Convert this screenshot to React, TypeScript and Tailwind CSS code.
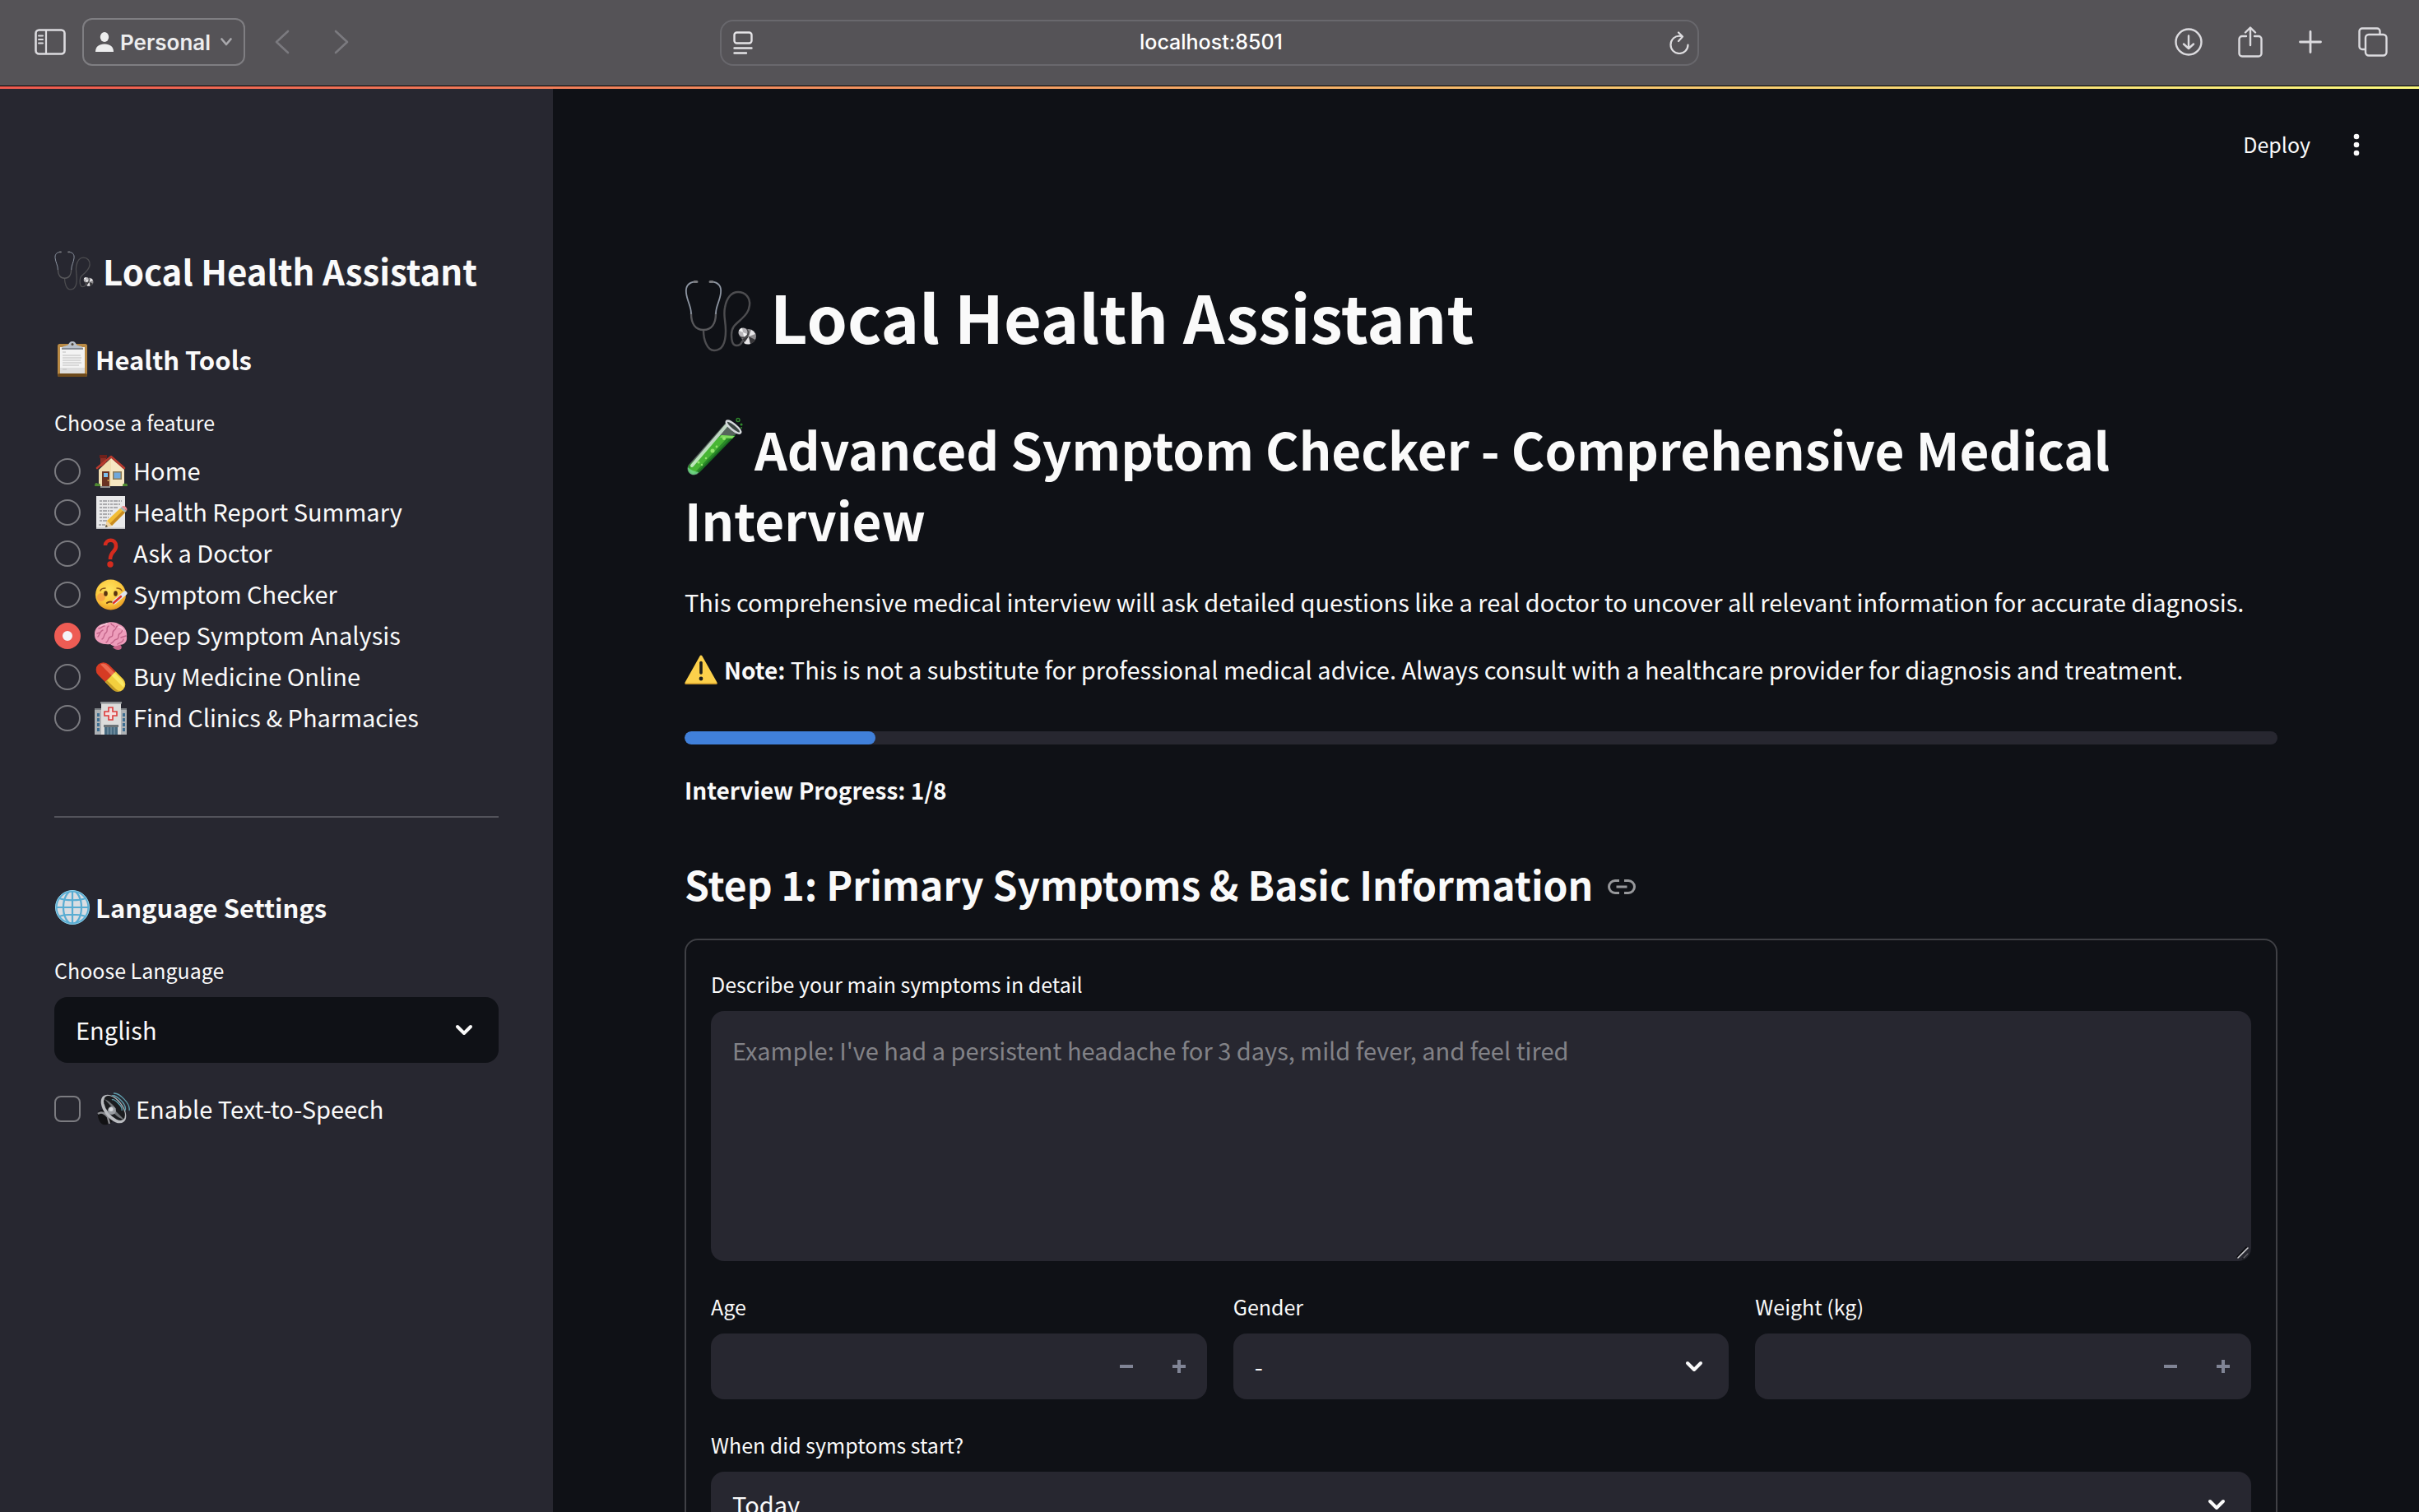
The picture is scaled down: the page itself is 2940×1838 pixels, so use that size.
import React, { useState } from "react";

type SvgProps = { className?: string };

function Stethoscope({ className }: SvgProps) {
  return (
    <svg viewBox="0 0 88 88" fill="none" strokeLinecap="round" className={className} aria-hidden="true">
      <path d="M23 62C23 72 27 86 36 86C46 86 50 76 50 62C50 50 47 44 49 34C51 22 57 15 65 15C74 15 80 22 79 31C78 40 73 44 68 49C61 55 57 58 57 67C57 75 59 80 63 80C66 80 69 78 70 75" stroke="#4d4d50" strokeWidth="2.400" />
      <path d="M8 41C8 53 13 61 23 61C33 61 38 53 38 41" stroke="#58585b" strokeWidth="2.400" />
      <path d="M13 2.500C5 3 1 8 2 16C3 26 8 32 8 41M33 2.500C41 3 45 8 44 16C43 26 38 32 38 41" stroke="#8e96a3" strokeWidth="1.800" />
      <path d="M12 2.500H15M31 2.500H34" stroke="#77787c" strokeWidth="3" />
      <circle cx="78" cy="69" r="9" fill="#8d8b8e" />
      <path d="M78 69L72 77A9 9 0 0 0 80 78ZM78 69L86 66A9 9 0 0 0 81 61Z" fill="#e6e5e7" />
      <path d="M78 69L80 78A9 9 0 0 0 86 73ZM78 69L70 72L73 76Z" fill="#38373a" />
      <circle cx="72" cy="65" r="6.500" fill="#4a494c" />
      <circle cx="71" cy="64" r="5.500" fill="#b7b5b9" />
      <path d="M71 64L66 62A5.500 5.500 0 0 1 70 58.500ZM71 64L76 66A5.500 5.500 0 0 1 72 69.500Z" fill="#f5f5f6" />
    </svg>
  );
}

function TestTube({ className }: SvgProps) {
  return (
    <svg viewBox="0 0 72 76" fill="none" className={className} aria-hidden="true">
      <path d="M50 8L5 59C0 66 8 75 16 70L64 20Z" fill="#56645c" />
      <path d="M44 23L5 60C1 67 9 74 16 69L60 24Z" fill="#2a8a28" />
      <path d="M44 23L7 60C5 64 7 69 11 70L54 24Z" fill="#48b535" />
      <path d="M4 64C5 72 13 73 17 68C13 67 8 66 4 62Z" fill="#7ee0a0" opacity=".7" />
      <path d="M51 11L9 60" stroke="#d9f3dc" strokeWidth="4" strokeLinecap="round" opacity=".8" />
      <path d="M61 23L17 68" stroke="#1b6f22" strokeWidth="2" />
      <path d="M45 23L61 24L58 27L43 26Z" fill="#7fdc5c" />
      <path d="M51 6C54 3 70 16 68 20C66 24 48 10 51 6Z" fill="#3a4541" stroke="#d5d9dc" strokeWidth="2.500" />
      <g fill="#93e46f">
        <circle cx="34" cy="42" r="2.500" />
        <circle cx="39" cy="37" r="1.400" />
        <circle cx="48" cy="27" r="2" />
        <circle cx="26" cy="51" r="1.300" />
        <circle cx="17" cy="56" r="1.600" />
        <circle cx="21" cy="59" r="1.200" />
      </g>
      <circle cx="65" cy="4.500" r="2" stroke="#2f8a2c" strokeWidth="1.400" />
      <circle cx="69" cy="10" r="1.600" fill="#2f8a2c" />
      <circle cx="69" cy="14" r="1" fill="#2f8a2c" />
    </svg>
  );
}

function Clipboard({ className }: SvgProps) {
  return (
    <svg viewBox="0 0 44 44" fill="none" className={className} aria-hidden="true">
      <rect x="4" y="3" width="36" height="40" rx="2.500" fill="#b98a45" />
      <rect x="4" y="39" width="36" height="4" rx="2" fill="#6d4a1c" />
      <path d="M7 7H37V39H7Z" fill="#f3f3f3" />
      <path d="M7 32H37V39H7Z" fill="#dedede" />
      <g stroke="#bdbdbd" strokeWidth="1.200">
        <path d="M10 13H14M10 17H32M10 20H33M10 23H32M10 26H33M10 29H30M10 34H15" />
      </g>
      <path d="M9 9C9 5 15 6 17 4C18 2 19 0 22 0C25 0 26 2 27 4C29 6 35 5 35 9Z" fill="#b8c0ca" />
      <path d="M9 9H35" stroke="#6f757e" strokeWidth="1.500" />
      <circle cx="22" cy="3.500" r="1.500" fill="#4d4338" />
    </svg>
  );
}

function House({ className }: SvgProps) {
  return (
    <svg viewBox="0 0 40 40" fill="none" className={className} aria-hidden="true">
      <path d="M7 1H14V14H7Z" fill="#8e2f26" />
      <path d="M6 0H15V4H6Z" fill="#6f211b" />
      <path d="M5 18L20 4L36 18V38H5Z" fill="#f1ddb0" />
      <path d="M20 4L36 18V38H20Z" fill="#f7e7c2" />
      <path d="M3 16L20 2L36 16" stroke="#b93a2e" strokeWidth="2.600" strokeLinejoin="round" strokeLinecap="round" />
      <path d="M9 20H18V38H9Z" fill="#6a3322" />
      <rect x="11" y="22" width="5" height="5" fill="#7cc0ee" />
      <circle cx="16.500" cy="31" r="1" fill="#e2b95a" />
      <rect x="22" y="20" width="11" height="10" fill="#8c7a55" />
      <rect x="23.500" y="21.500" width="8" height="7" fill="#6fa8dc" />
      <path d="M0 38C0 34 2 33 4 35C7 34 7 36 7 38ZM34 38C34 35 35 34 37 35C40 34 40 36 40 38Z" fill="#4f8a32" />
      <path d="M7 38H19V40H7Z" fill="#8d8d8d" />
    </svg>
  );
}

function Memo({ className }: SvgProps) {
  return (
    <svg viewBox="0 0 40 40" fill="none" className={className} aria-hidden="true">
      <rect x="2" y="0" width="35" height="40" fill="#e9e9ea" />
      <path d="M2 38.500H37V40H2Z" fill="#bdbdbf" />
      <g stroke="#6e6e73" strokeWidth="1.200" strokeDasharray="3 1 5 1 2 1">
        <path d="M6 6H33M6 10H31M6 14H28M6 18H23M6 22H20M6 26H17M6 30H15M5 35H13" />
      </g>
      <path d="M31 15L37 20L21 36L13 38L15 30Z" fill="#f2bd36" />
      <path d="M34 18L37 20L21 36L18 34Z" fill="#c98b1f" />
      <path d="M15 30L21 36L13 38Z" fill="#efd3a4" />
      <path d="M14 35L16 37L13 38Z" fill="#3a3a3a" />
      <path d="M31 15L33 13L39 18L37 20Z" fill="#a9b7ae" />
      <path d="M33 13C35 10 41 14 39 18Z" fill="#ee8d92" />
    </svg>
  );
}

function Question({ className }: SvgProps) {
  return (
    <svg viewBox="0 0 40 40" fill="none" className={className} aria-hidden="true">
      <path d="M13 10C13 2 26 1 26 11C26 18 19 17 19 27" stroke="#d52b1e" strokeWidth="4.600" />
      <circle cx="19" cy="33" r="3.700" fill="#d52b1e" />
    </svg>
  );
}

function SickFace({ className }: SvgProps) {
  return (
    <svg viewBox="0 0 40 40" fill="none" className={className} aria-hidden="true">
      <defs>
        <radialGradient id="face" cx=".45" cy=".35" r=".65">
          <stop offset="0" stopColor="#ffe561" />
          <stop offset=".7" stopColor="#fbc63b" />
          <stop offset="1" stopColor="#e69a25" />
        </radialGradient>
      </defs>
      <circle cx="19.500" cy="20" r="18.500" fill="url(#face)" />
      <circle cx="8" cy="23" r="5" fill="#f58a45" opacity=".55" />
      <ellipse cx="13.500" cy="18.500" rx="2.300" ry="3.300" fill="#5a3410" />
      <ellipse cx="25.500" cy="18.500" rx="2.300" ry="3.300" fill="#5a3410" />
      <path d="M7 15C8 12 11 12 13 12M27 12C30 12 32 13 33 15" stroke="#8a571b" strokeWidth="1.500" strokeLinecap="round" />
      <path d="M15 30C17 28 21 28 24 30" stroke="#6b3b12" strokeWidth="2" strokeLinecap="round" />
      <path d="M24 29L37 18" stroke="#dfe6ee" strokeWidth="5" strokeLinecap="round" />
      <path d="M23 30L32 22" stroke="#e2332d" strokeWidth="2.400" strokeLinecap="round" />
    </svg>
  );
}

function BrainEmoji({ className }: SvgProps) {
  return (
    <svg viewBox="0 0 40 40" fill="none" className={className} aria-hidden="true">
      <path d="M27 30C32 30 34 33 32 36C29 38 25 37 22 34Z" fill="#c9658a" />
      <path d="M0 20C-1 12 4 6 12 5C18 2 27 3 30 6C36 8 40 14 39 21C40 27 36 31 30 31C26 33 22 33 19 30C12 31 1 29 0 20Z" fill="#ee9dbb" />
      <g stroke="#c4668b" strokeWidth="1.400" strokeLinecap="round">
        <path d="M4 21C7 18 6 14 10 13M9 24C13 22 10 18 14 16C17 14 13 10 17 8M14 28C18 26 15 22 20 21C24 20 20 15 24 13C27 12 25 8 28 8M20 29C24 28 22 25 27 24C31 23 27 18 31 17C34 16 33 12 35 12M28 30C30 28 35 28 35 24M5 11C8 11 9 8 12 8M20 5C21 8 23 6 24 9M3 17L6 16M32 22L38 20" />
      </g>
      <path d="M7 8C10 6 13 6 15 5M29 9C32 9 34 11 35 13" stroke="#f9cbdc" strokeWidth="1.500" strokeLinecap="round" />
    </svg>
  );
}

function PillEmoji({ className }: SvgProps) {
  return (
    <svg viewBox="0 0 40 40" fill="none" className={className} aria-hidden="true">
      <g transform="rotate(45 19.500 20)">
        <path d="M19 11H7A9 9 0 0 0 7 29H19Z" fill="#d63b24" />
        <path d="M19 11H32A9 9 0 0 1 32 29H19Z" fill="#f2cf3e" />
        <path d="M19 13H7A7 5 0 0 0 0 18H19Z" fill="#ec6a50" />
        <path d="M19 13H32A7 5 0 0 1 39 18H19Z" fill="#fbe966" />
        <path d="M19 26H32A7 4 0 0 0 40 23A9 9 0 0 1 32 29H19Z" fill="#c39a25" />
      </g>
    </svg>
  );
}

function HospitalEmoji({ className }: SvgProps) {
  return (
    <svg viewBox="0 0 40 40" fill="none" className={className} aria-hidden="true">
      <path d="M0 10H39V40H0Z" fill="#aeb2b5" />
      <path d="M0 8H9V10H0ZM31 8H39V10H31Z" fill="#7f8488" />
      <path d="M8 2H32V40H8Z" fill="#dcdcdb" />
      <path d="M7 0H33V2.500H7Z" fill="#8a8e92" />
      <path d="M17 7H22V12H27V17H22V22H17V17H12V12H17Z" fill="#f4dede" stroke="#dc3b3b" strokeWidth="1.600" />
      <path d="M11 28H29V31H11Z" fill="#6d7478" />
      <path d="M12 31H28V40H12Z" fill="#476a80" />
      <path d="M16 31V40M20 31V40M24 31V40" stroke="#8ba3b1" strokeWidth="1" />
      <g fill="#3e6f93">
        <path d="M3 14H6V18H3ZM3 20H6V24H3ZM3 26H6V30H3ZM3 32H6V36H3ZM34 14H37V18H34ZM34 20H37V24H34ZM34 26H37V30H34ZM34 32H37V36H34Z" />
      </g>
    </svg>
  );
}

function GlobeEmoji({ className }: SvgProps) {
  return (
    <svg viewBox="0 0 44 44" fill="none" className={className} aria-hidden="true">
      <circle cx="22" cy="22" r="20" fill="#d9dde2" />
      <g stroke="#58acd2" strokeWidth="2.200">
        <circle cx="22" cy="22" r="19.500" />
        <ellipse cx="22" cy="22" rx="11" ry="20" />
        <path d="M22 2V42M2 22H42M6 11C14 14 30 14 38 11M6 33C14 30 30 30 38 33" />
      </g>
      <circle cx="22" cy="22" r="20.500" stroke="#8fd0ea" strokeWidth="1" />
    </svg>
  );
}

function Speaker({ className }: SvgProps) {
  return (
    <svg viewBox="0 0 40 40" fill="none" className={className} aria-hidden="true">
      <path d="M1 24C3 20 9 20 14 24L20 32C18 38 12 40 7 39C3 37 0 30 1 24Z" fill="#121214" />
      <path d="M1 26C5 23 10 25 13 30L15 38" stroke="#8a8b8f" strokeWidth="2.400" />
      <ellipse cx="20" cy="20" rx="11.500" ry="20" transform="rotate(-38 20 20)" fill="#b9bbbf" />
      <ellipse cx="21" cy="19" rx="9" ry="17.500" transform="rotate(-38 21 19)" fill="#1b1c1f" />
      <path d="M20 20L9 8C14 10 20 15 23 20ZM21 21L33 33C27 32 22 27 18 23Z" fill="#6f7276" />
      <circle cx="18" cy="22" r="5" fill="#9a9da2" />
      <circle cx="17" cy="20.500" r="2.500" fill="#d6d9dd" />
      <g stroke="#5f9dab" strokeWidth="1.400">
        <path d="M18 9C20 7 32 17 30 22M18 4C22 2 37 14 34 22M20 1C27 0 41 14 39 22" />
      </g>
    </svg>
  );
}

function WarningEmoji({ className }: SvgProps) {
  return (
    <svg viewBox="0 0 40 36" fill="none" className={className} aria-hidden="true">
      <path d="M20 2L38 34H2Z" fill="#fcd04b" stroke="#fcd04b" strokeWidth="3" strokeLinejoin="round" />
      <path d="M1 35H39" stroke="#d9a32c" strokeWidth="1.500" strokeLinecap="round" />
      <path d="M20 9.500V22" stroke="#1d1d1b" strokeWidth="3.600" strokeLinecap="round" />
      <circle cx="20" cy="29" r="2.400" fill="#1d1d1b" />
    </svg>
  );
}

function Chevron() {
  return (
    <svg viewBox="0 0 24 16" fill="none" className="pointer-events-none absolute right-[30px] top-8 h-4 w-6" aria-hidden="true">
      <path d="M4 4L12 12L20 4" stroke="#fafafa" strokeWidth="4" strokeLinecap="round" strokeLinejoin="round" />
    </svg>
  );
}

const labelText = "block text-[25px] leading-[46px]";

function SelectField({ id, label, options, dark = false }: { id: string; label: string; options: string[]; dark?: boolean }) {
  return (
    <div>
      <label htmlFor={id} className={labelText}>{label}</label>
      <div className="relative mt-[10px]">
        <select
          id={id}
          className={`h-20 w-full appearance-none rounded-2xl pr-20 pl-[26px] text-[29px] outline-none ${dark ? "bg-[#0f1116]" : "bg-[#272730]"}`}
        >
          {options.map((o) => (
            <option key={o}>{o}</option>
          ))}
        </select>
        <Chevron />
      </div>
    </div>
  );
}

function NumberField({ id, label }: { id: string; label: string }) {
  const [value, setValue] = useState<string>("");
  const step = (d: number) => setValue(String(Math.max(0, Number(value) + d)));
  return (
    <div>
      <label htmlFor={id} className={labelText}>{label}</label>
      <div className="mt-[10px] flex h-20 overflow-hidden rounded-2xl bg-[#272730] text-[#808495]">
        <input
          id={id}
          inputMode="decimal"
          value={value}
          onChange={(e) => setValue(e.target.value)}
          className="min-w-0 flex-1 bg-transparent pl-[26px] text-[29px] text-[#fafafa] outline-none"
        />
        <button type="button" aria-label={`Decrease ${label}`} onClick={() => step(-1)} className="flex w-16 items-center justify-center">
          <svg viewBox="0 0 16 16" className="size-4"><path d="M0 6H16V10H0Z" fill="currentColor" /></svg>
        </button>
        <button type="button" aria-label={`Increase ${label}`} onClick={() => step(1)} className="mr-0.5 flex w-16 items-center justify-center">
          <svg viewBox="0 0 16 16" className="size-4"><path d="M6 0H10V6H16V10H10V16H6V10H0V6H6Z" fill="currentColor" /></svg>
        </button>
      </div>
    </div>
  );
}

const features = [
  { name: "Home", Icon: House },
  { name: "Health Report Summary", Icon: Memo },
  { name: "Ask a Doctor", Icon: Question },
  { name: "Symptom Checker", Icon: SickFace },
  { name: "Deep Symptom Analysis", Icon: BrainEmoji },
  { name: "Buy Medicine Online", Icon: PillEmoji },
  { name: "Find Clinics & Pharmacies", Icon: HospitalEmoji },
];

function BrowserBar() {
  return (
    <div className="grid h-[104px] shrink-0 grid-cols-[1fr_1190px_1fr] items-center bg-[#555357] font-['Inter',sans-serif] text-[#dcdbdf]">
      <div className="flex items-center pb-0.5 pl-[42px]">
        <button type="button" aria-label="Show sidebar">
          <svg viewBox="0 0 38 32" fill="none" stroke="currentColor" className="h-8 w-[38px]">
            <rect x="1.500" y="1.500" width="35" height="29" rx="4" strokeWidth="2.600" />
            <path d="M14 2V30" strokeWidth="2.200" />
            <path d="M5 8.500H10M5 13H10M5 17.500H10" strokeWidth="2" strokeLinecap="round" />
          </svg>
        </button>
        <button type="button" className="ml-5 flex h-[58px] items-center rounded-xl border-2 border-[#7f7e82] px-[14px] text-[26px] font-semibold text-[#ededee]">
          <svg viewBox="0 0 22 24" fill="currentColor" className="mr-2 h-6 w-[22px]">
            <ellipse cx="11" cy="6" rx="5.200" ry="6" />
            <path d="M0 24C0 18 4 14.500 11 14.500S22 18 22 24Z" />
          </svg>
          Personal
          <svg viewBox="0 0 14 10" fill="none" stroke="#a9a8ac" className="ml-3 h-[10px] w-[14px]">
            <path d="M1.500 1.500L7 8L12.500 1.500" strokeWidth="2.600" strokeLinecap="round" strokeLinejoin="round" />
          </svg>
        </button>
        <button type="button" aria-label="Back" className="ml-9 text-[#7b7a7f]">
          <svg viewBox="0 0 18 30" fill="none" stroke="currentColor" className="h-[30px] w-[18px]">
            <path d="M16 2L2 15L16 28" strokeWidth="2.600" strokeLinecap="round" strokeLinejoin="round" />
          </svg>
        </button>
        <button type="button" aria-label="Forward" className="ml-[54px] text-[#7b7a7f]">
          <svg viewBox="0 0 18 30" fill="none" stroke="currentColor" className="h-[30px] w-[18px]">
            <path d="M2 2L16 15L2 28" strokeWidth="2.600" strokeLinecap="round" strokeLinejoin="round" />
          </svg>
        </button>
      </div>
      <div className="flex h-14 items-center rounded-2xl border-2 border-[#69686d] pr-[10px] pl-[14px]">
        <svg viewBox="0 0 24 28" fill="none" stroke="#e4e3e6" className="h-7 w-6">
          <rect x="1.500" y="1.500" width="21" height="13" rx="3" strokeWidth="2.400" />
          <path d="M1.500 20.500H22.500M1.500 26.500H16" strokeWidth="2.400" strokeLinecap="round" />
        </svg>
        <input aria-label="Address" defaultValue="localhost:8501" className="min-w-0 flex-1 bg-transparent text-center text-[25px] font-medium text-white outline-none" />
        <button type="button" aria-label="Reload">
          <svg viewBox="0 0 24 28" fill="none" stroke="#dedde0" className="h-7 w-6">
            <path d="M14 6C7 4.500 1.500 10 1.500 16.500A10.500 10.500 0 0 0 22.500 16.500" strokeWidth="2.200" strokeLinecap="round" />
            <path d="M11 1.500L16 6.500L11 12" strokeWidth="2.200" strokeLinecap="round" strokeLinejoin="round" />
          </svg>
        </button>
      </div>
      <div className="flex items-center justify-end pr-[38px] pb-0.5">
        <button type="button" aria-label="Downloads" className="mr-[42px]">
          <svg viewBox="0 0 36 36" fill="none" stroke="currentColor" strokeWidth="2.400" strokeLinecap="round" strokeLinejoin="round" className="size-9">
            <circle cx="18" cy="18" r="15.500" />
            <path d="M18 10.500V26M12 20.500L18 26L24 20.500" />
          </svg>
        </button>
        <button type="button" aria-label="Share" className="mr-[44px]">
          <svg viewBox="0 0 30 38" fill="none" stroke="currentColor" strokeWidth="2.400" strokeLinecap="round" strokeLinejoin="round" className="h-[38px] w-[30px]">
            <path d="M10 12H5A3.500 3.500 0 0 0 1.500 15.500V33A3.500 3.500 0 0 0 5 36.500H25A3.500 3.500 0 0 0 28.500 33V15.500A3.500 3.500 0 0 0 25 12H20" />
            <path d="M15 23V2M9 7.500L15 1.500L21 7.500" />
          </svg>
        </button>
        <button type="button" aria-label="New tab" className="mr-[44px]">
          <svg viewBox="0 0 28 28" fill="none" stroke="currentColor" strokeWidth="2.800" strokeLinecap="round" className="size-7">
            <path d="M14 1.500V26.500M1.500 14H26.500" />
          </svg>
        </button>
        <button type="button" aria-label="Show tabs">
          <svg viewBox="0 0 36 36" fill="none" stroke="currentColor" strokeWidth="2.400" strokeLinejoin="round" className="size-9">
            <rect x="9" y="9" width="25.500" height="25.500" rx="4" />
            <path d="M9 27H5A3.500 3.500 0 0 1 1.500 23.500V5A3.500 3.500 0 0 1 5 1.500H23A3.500 3.500 0 0 1 26.500 5V9" />
          </svg>
        </button>
      </div>
    </div>
  );
}

function Sidebar() {
  const [selected, setSelected] = useState("Deep Symptom Analysis");
  return (
    <aside className="w-[672px] shrink-0 bg-[#272730] px-[66px] pt-48">
      <h2 className="flex items-center gap-[11px] text-[42px] leading-[58px] font-semibold">
        <Stethoscope className="size-12" />
        Local Health Assistant
      </h2>
      <h3 className="mt-[57px] flex items-center gap-[6px] text-[31px] leading-[44px] font-semibold">
        <Clipboard className="size-11" />
        Health Tools
      </h3>
      <fieldset className="mt-[31px]">
        <legend className={labelText}>Choose a feature</legend>
        <div className="mt-3">
          {features.map(({ name, Icon }) => (
            <label key={name} className="flex h-[50px] items-center text-[29px] leading-[44px]">
              <input
                type="radio"
                name="feature"
                checked={selected === name}
                onChange={() => setSelected(name)}
                className="size-8 appearance-none rounded-full border-2 border-[#7b7b80] checked:border-[10px] checked:border-[#ee5c54] checked:bg-[#f4f4f8]"
              />
              <Icon className="mr-[7px] ml-[17px] size-10" />
              <span className="pb-1">{name}</span>
            </label>
          ))}
        </div>
      </fieldset>
      <hr className="mt-[94px] border-t-2 border-[#53535b]" />
      <h3 className="mt-[87px] mb-[31px] flex items-center gap-[6px] text-[31px] leading-[44px] font-semibold">
        <GlobeEmoji className="size-11" />
        Language Settings
      </h3>
      <SelectField id="language" label="Choose Language" options={["English"]} dark />
      <label className="mt-[31px] flex h-[50px] items-center text-[29px] leading-[44px]">
        <input type="checkbox" className="size-8 appearance-none rounded-lg border-2 border-[#7b7b80] checked:bg-[#ee5c54]" />
        <Speaker className="mr-[7px] ml-5 size-10" />
        <span className="pb-[3px]">Enable Text-to-Speech</span>
      </label>
    </aside>
  );
}

export default function App() {
  return (
    <div className="flex h-screen flex-col overflow-hidden bg-[#0f1116] font-['Noto_Sans_CJK_SC',sans-serif] text-[#fafafa]">
      <BrowserBar />
      <div className="h-px shrink-0 bg-black" />
      <div className="h-[3px] shrink-0 bg-linear-to-r/srgb from-[#ee5a50] to-[#fdfb80]" />
      <div className="flex min-h-0 flex-1">
        <Sidebar />
        <main className="min-w-0 flex-1 overflow-hidden">
          <header className="flex h-[136px] items-center justify-end pr-[60px]">
            <button type="button" className="text-[25px]">Deploy</button>
            <button type="button" aria-label="Main menu" className="ml-10 flex w-8 justify-center">
              <svg viewBox="0 0 8 28" fill="currentColor" className="h-7 w-2">
                <circle cx="4" cy="4" r="3.300" />
                <circle cx="4" cy="14" r="3.300" />
                <circle cx="4" cy="24" r="3.300" />
              </svg>
            </button>
          </header>
          <div className="pr-[172px] pl-40">
            <h1 className="mt-[87px] flex items-center gap-4 text-[79px] leading-[106px] font-bold">
              <Stethoscope className="size-[88px]" />
              Local Health Assistant
            </h1>
            <h2 className="mt-[65px] text-[62px] leading-[86px] font-semibold">
              <TestTube className="mr-[13px] inline-block h-[76px] w-[72px] align-[-10px]" />
              Advanced Symptom Checker - Comprehensive Medical Interview
            </h2>
            <p className="mt-[31px] text-[29px] leading-[52px]">
              This comprehensive medical interview will ask detailed questions like a real doctor to uncover all relevant information for accurate diagnosis.
            </p>
            <p className="mt-[30px] text-[29px] leading-[52px]">
              <WarningEmoji className="mr-2 inline-block h-9 w-10 align-[-6px]" />
              <strong className="text-[28px] font-semibold">Note:</strong> This is not a substitute for professional medical advice. Always consult with a healthcare provider for diagnosis and treatment.
            </p>
            <div role="progressbar" aria-label="Interview progress" aria-valuenow={12} className="mt-[49px] h-4 overflow-hidden rounded-lg bg-[#272730]">
              <div className="h-full w-[12%] rounded-lg bg-[#4080da]" />
            </div>
            <p className="mt-[29px] text-[28px] leading-[52px] font-semibold">Interview Progress: 1/8</p>
            <h3 className="mt-[54px] flex items-center gap-[18px] text-[48px] leading-[68px] font-semibold">
              Step 1: Primary Symptoms &amp; Basic Information
              <a href="#step-1" aria-label="Link to this heading" className="flex pt-2 text-[#97989b]">
                <svg viewBox="0 0 34 20" fill="none" stroke="currentColor" strokeWidth="3" className="h-5 w-[34px]">
                  <path d="M14 2.500H9A7.500 7.500 0 0 0 9 17.500H14M20 2.500H25A7.500 7.500 0 0 1 25 17.500H20M10.500 10H23.500" />
                </svg>
              </a>
            </h3>
            <form id="step-1" className="mt-[33px] flex flex-col gap-8 rounded-2xl border-2 border-[#3f4045] p-[30px]">
              <div>
                <label htmlFor="symptoms" className={labelText}>Describe your main symptoms in detail</label>
                <div className="relative mt-[10px]">
                  <textarea
                    id="symptoms"
                    placeholder="Example: I've had a persistent headache for 3 days, mild fever, and feel tired"
                    className="block h-[304px] w-full resize-none rounded-2xl bg-[#272730] px-[26px] py-6 text-[29px] leading-[46px] outline-none placeholder:text-[#828287]"
                  />
                  <svg viewBox="0 0 16 16" fill="none" strokeLinecap="round" className="pointer-events-none absolute right-[2px] bottom-[2px] size-4" aria-hidden="true">
                    <path d="M1 13L12 1M8 15L14 9" stroke="#0c0c0f" strokeWidth="1.500" />
                    <path d="M2 14L14 2" stroke="#d0d0d3" strokeWidth="1.500" />
                    <path d="M9 14L14 9" stroke="#6a6a70" strokeWidth="1.200" />
                  </svg>
                </div>
              </div>
              <div className="grid grid-cols-3 gap-8">
                <NumberField id="age" label="Age" />
                <SelectField id="gender" label="Gender" options={["-", "Male", "Female", "Other"]} />
                <NumberField id="weight" label="Weight (kg)" />
              </div>
              <SelectField id="onset" label="When did symptoms start?" options={["Today", "Yesterday", "This week"]} />
            </form>
          </div>
        </main>
      </div>
    </div>
  );
}
